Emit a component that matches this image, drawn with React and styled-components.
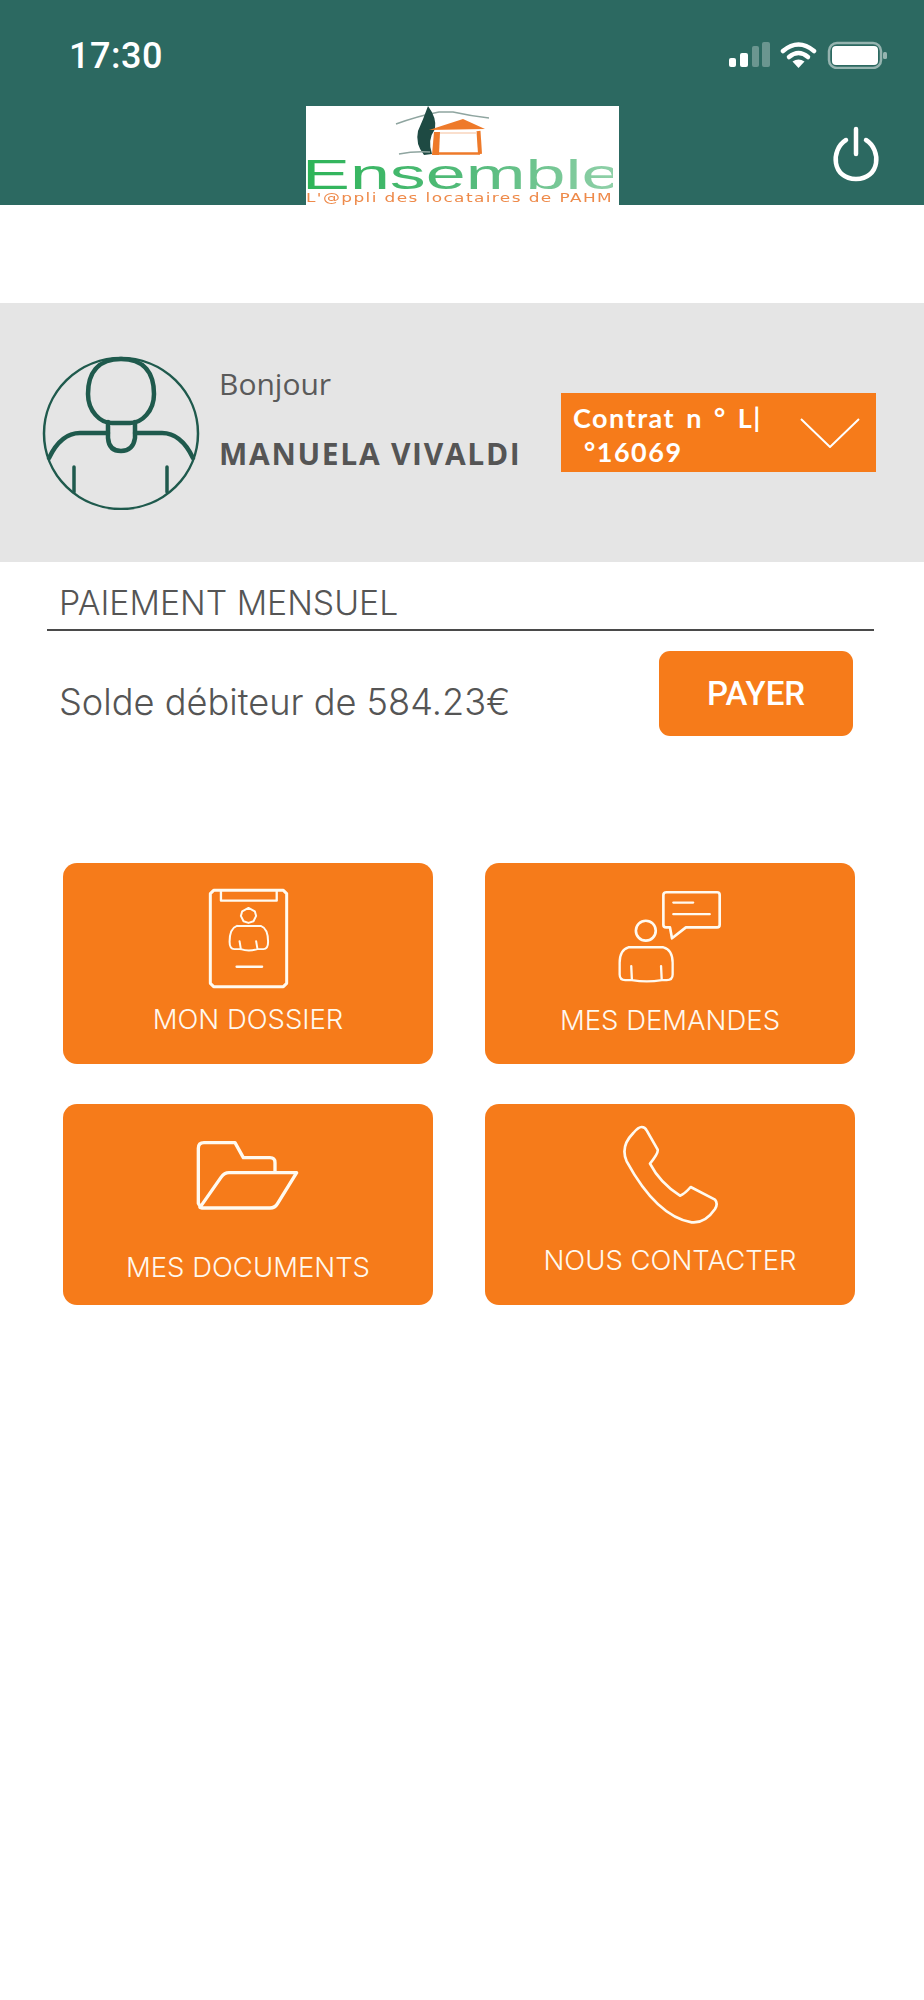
import React from "react";
import styled, { createGlobalStyle } from "styled-components";

const GlobalStyle = createGlobalStyle`
  html, body {
    margin: 0;
    padding: 0;
    background: #fff;
  }
  * {
    box-sizing: border-box;
  }
`;

const Page = styled.div`
  width: 924px;
  min-height: 2000px;
  background: #fff;
  font-family: Inter, "Liberation Sans", sans-serif;
  color: #555;
`;

const Header = styled.header`
  height: 205px;
  background: #2c6961;
  display: flex;
  flex-direction: column;
`;

const StatusBar = styled.div`
  height: 106px;
  padding: 36px 36px 0 69px;
  display: flex;
  justify-content: space-between;
  align-items: flex-start;
`;

const Clock = styled.span`
  font-family: Roboto, sans-serif;
  font-size: 36px;
  line-height: 40px;
  font-weight: 500;
  letter-spacing: 0.5px;
  color: #fff;
`;

const StatusIcons = styled.svg`
  margin-top: 5px;
  display: block;
`;

const LogoRow = styled.div`
  flex: 1;
  padding: 0 44px;
  display: grid;
  grid-template-columns: 1fr auto 1fr;
  align-items: stretch;
`;

const Logo = styled.div`
  grid-column: 2;
  width: 313px;
  background: #fff;
  display: flex;
  flex-direction: column;
`;

const LogoDrawing = styled.svg`
  display: block;
  height: 53px;
`;

const LogoName = styled.div`
  margin-left: -4px;
  font-family: "Liberation Sans", sans-serif;
  font-size: 42px;
  line-height: 32px;
  height: 32px;
  width: 182px;
  transform: scaleX(1.71);
  transform-origin: left center;
  background: linear-gradient(90deg, #2cb457 0%, #55bb7c 55%, #8fd0a8 100%);
  -webkit-background-clip: text;
  background-clip: text;
  color: transparent;
`;

const LogoTagline = styled.div`
  width: 219px;
  font-family: "DejaVu Sans", sans-serif;
  font-size: 12px;
  line-height: 14px;
  letter-spacing: 1px;
  white-space: nowrap;
  transform: scaleX(1.41);
  transform-origin: left center;
  color: #ee8a4a;
`;

const PowerButton = styled.svg`
  grid-column: 3;
  justify-self: end;
  margin-top: 20px;
  display: block;
`;

const Welcome = styled.section`
  margin-top: 98px;
  height: 259px;
  background: #e5e5e5;
  padding: 0 48px 0 42px;
  display: flex;
  align-items: center;
`;

const Avatar = styled.svg`
  display: block;
  flex: none;
`;

const Greeting = styled.div`
  margin: 0 0 27px 19px;
  flex: 1;
  display: flex;
  flex-direction: column;
  gap: 31px;
  font-family: "Open Sans", sans-serif;
`;

const Hello = styled.span`
  font-size: 30px;
  line-height: 38px;
  color: #5a5a5a;
`;

const Name = styled.span`
  font-size: 30px;
  line-height: 40px;
  font-weight: 700;
  letter-spacing: 1.7px;
  color: #555;
  white-space: nowrap;
`;

const ContractSelect = styled.div`
  width: 315px;
  height: 79px;
  background: #f67b1a;
  padding: 8px 16px 0 12px;
  display: flex;
  justify-content: space-between;
  align-items: flex-start;
`;

const ContractText = styled.span`
  width: 205px;
  font-family: Lato, sans-serif;
  font-size: 27px;
  line-height: 34px;
  font-weight: 700;
  letter-spacing: 1.5px;
  word-spacing: 3px;
  color: #fff;
`;

const Chevron = styled.svg`
  margin-top: 17px;
  display: block;
`;

const Payment = styled.section`
  padding: 22px 50px 0 47px;
`;

const SectionTitle = styled.h2`
  margin: 0;
  padding: 0 0 7px 12px;
  border-bottom: 2px solid #4a4a4a;
  font-size: 33.8px;
  line-height: 38px;
  font-weight: 300;
  color: #555;
`;

const BalanceRow = styled.div`
  margin-top: 20px;
  padding: 0 21px 0 12px;
  display: flex;
  justify-content: space-between;
  align-items: center;
`;

const Balance = styled.span`
  margin-top: 17px;
  font-size: 36.2px;
  line-height: 40px;
  font-weight: 300;
  color: #555;
`;

const PayButton = styled.button`
  width: 194px;
  height: 85px;
  border: 0;
  border-radius: 11px;
  background: #f67b1a;
  font-family: Roboto, sans-serif;
  font-size: 33px;
  font-weight: 500;
  color: #fff;
`;

const Tiles = styled.nav`
  margin-top: 127px;
  padding: 0 69px 0 63px;
  display: grid;
  grid-template-columns: 370px 370px;
  grid-auto-rows: 201px;
  column-gap: 52px;
  row-gap: 40px;
`;

const Tile = styled.a`
  border-radius: 14px;
  background: #f67b1a;
  padding-top: ${(p) => p.$top}px;
  display: flex;
  flex-direction: column;
  align-items: center;
`;

const TileIcon = styled.svg`
  display: block;
  fill: none;
  stroke: #fffaf0;
  stroke-linecap: round;
  stroke-linejoin: round;
  height: ${(p) => p.$height}px;
  width: ${(p) => p.$width}px;
  margin-left: ${(p) => p.$shift || 0}px;
`;

const TileLabel = styled.span`
  margin-top: ${(p) => p.$gap}px;
  font-size: 27.5px;
  line-height: 30px;
  font-weight: 300;
  color: #fff8ee;
  white-space: nowrap;
`;

const App = () => {
  return (
    <Page>
      <GlobalStyle />
      <Header>
        <StatusBar>
          <Clock>17:30</Clock>
          <StatusIcons width="161" height="28" viewBox="0 0 161 28" fill="#fff">
            <rect x="2" y="17" width="7" height="9" rx="2" />
            <rect x="13" y="12" width="8" height="14" rx="2" />
            <rect x="25" y="5" width="7" height="21" rx="2" opacity="0.3" />
            <rect x="35" y="1" width="8" height="25" rx="2" opacity="0.3" />
            <path d="M56 10 Q71.5 -3 87 10" fill="none" stroke="#fff" strokeWidth="4.5" strokeLinecap="round" />
            <path d="M62 16 Q71.5 8 81 16" fill="none" stroke="#fff" strokeWidth="4.5" strokeLinecap="round" />
            <path d="M65.5 20.5 Q71.5 16.5 77.5 20.5 L71.5 27Z" />
            <rect x="102" y="2" width="52" height="25" rx="8" fill="none" stroke="#fff" strokeOpacity="0.5" strokeWidth="2.5" />
            <rect x="105" y="5" width="46" height="19" rx="4" />
            <rect x="156" y="11" width="4" height="7" rx="1.5" opacity="0.5" />
          </StatusIcons>
        </StatusBar>
        <LogoRow>
          <Logo>
            <LogoDrawing width="313" height="53" viewBox="0 0 313 53">
              <path d="M90 18 Q112 10 133 6 L147 6 Q165 10 183 12" fill="none" stroke="#8fa5a0" strokeWidth="1.5" />
              <path d="M122 0 Q131 12 129 23 Q121 34 126 48 L118 49 Q109 38 112 25 Q117 14 122 0Z" fill="#1e4a43" />
              <path d="M123 24 L157 13 L179 23Z" fill="#ee7a2a" />
              <path d="M128 26 L134 26 L133 49 L126 49Z" fill="#ee7a2a" />
              <path d="M172.5 25 L174 48" fill="none" stroke="#ee7a2a" strokeWidth="4" />
              <path d="M127 47.5 L174 47.5" fill="none" stroke="#ee7a2a" strokeWidth="2.5" />
              <path d="M134 27 L171 27" fill="none" stroke="#f9d5bd" strokeWidth="1.5" />
              <path d="M93 48 Q108 45 124 46" fill="none" stroke="#8fa5a0" strokeWidth="1.5" />
            </LogoDrawing>
            <LogoName>Ensemble</LogoName>
            <LogoTagline>L'@ppli des locataires de PAHM</LogoTagline>
          </Logo>
          <PowerButton width="48" height="56" viewBox="0 0 48 56" fill="none" stroke="#fff" strokeWidth="4.5" strokeLinecap="round">
            <path d="M24 3 V28" />
            <path d="M14 14 C-2 24 0 53 24 53 C48 53 50 24 34 14" />
          </PowerButton>
        </LogoRow>
      </Header>

      <Welcome>
        <Avatar width="158" height="154" viewBox="12 10 158 154" fill="none" stroke="#1f5a4d" strokeLinecap="round">
          <ellipse cx="91" cy="87.5" rx="77" ry="75.5" strokeWidth="2.5" />
          <path d="M91 13 C115 13 124 28 124 48 C124 65 112 77 100 77 H82 C70 77 58 65 58 48 C58 28 67 13 91 13Z" strokeWidth="4.5" />
          <path d="M78 76 V92 Q79 105 91 105 Q103 105 105 92 V76" strokeWidth="4.5" />
          <path d="M78 87 H50 Q31 87 19 112" strokeWidth="4.5" />
          <path d="M105 87 H132 Q151 87 163 112" strokeWidth="4.5" />
          <path d="M44 121 V146 M137 121 V146" strokeWidth="3.5" />
        </Avatar>
        <Greeting>
          <Hello>Bonjour</Hello>
          <Name>MANUELA VIVALDI</Name>
        </Greeting>
        <ContractSelect>
          <ContractText>Contrat n ° L| {"\u00a0"}°16069</ContractText>
          <Chevron width="60" height="30" viewBox="0 0 60 30" fill="none" stroke="#fff" strokeWidth="2">
            <path d="M1 1 L30 29 L59 1" />
          </Chevron>
        </ContractSelect>
      </Welcome>

      <Payment>
        <SectionTitle>PAIEMENT MENSUEL</SectionTitle>
        <BalanceRow>
          <Balance>Solde débiteur de 584.23€</Balance>
          <PayButton>PAYER</PayButton>
        </BalanceRow>
      </Payment>

      <Tiles>
        <Tile $top={24}>
          <TileIcon $width={83} $height={103} viewBox="470 105 250 310" strokeWidth="9">
            <path d="M490 115 H700 L710 125 V395 L700 405 H490 L480 395 V125Z" />
            <path d="M512 115 V146 H680 V115" strokeWidth="7" />
            <path d="M595 168 L614 178 L618 192 L610 208 L595 213 L580 208 L572 192 L576 178Z" strokeWidth="6" />
            <path d="M560 222 H632 Q654 230 654 270 Q654 292 640 292 H622 L618 268 M622 292 Q595 300 572 292 H552 Q538 292 538 270 Q538 230 560 222 M572 292 L568 268" strokeWidth="6" />
            <path d="M559 345 H636" strokeWidth="7" />
          </TileIcon>
          <TileLabel $gap={14}>MON DOSSIER</TileLabel>
        </Tile>
        <Tile $top={26}>
          <TileIcon $width={106} $height={96} viewBox="440 118 320 288" strokeWidth="8">
            <path d="M590 127 H742 Q750 127 750 135 V225 Q750 233 742 233 H648 L606 266 L600 233 H588 Q580 233 580 225 V135 Q580 127 590 127Z" />
            <path d="M610 158 H670 M610 193 H720" strokeWidth="7" />
            <circle cx="527" cy="243" r="30" />
            <path d="M475 293 H580 Q608 300 608 340 V375 Q608 392 590 392 H575 L573 350 M575 392 Q530 400 485 392 H465 Q448 392 448 375 V340 Q448 300 475 293 M485 392 L483 350" strokeWidth="7" />
          </TileIcon>
          <TileLabel $gap={20}>MES DEMANDES</TileLabel>
        </Tile>
        <Tile $top={36}>
          <TileIcon $width={106} $height={74} $shift={-2} viewBox="437 150 318 222" strokeWidth="10">
            <path d="M455 348 L450 340 V175 Q450 158 467 158 H560 L585 203 H665 Q680 203 680 218 V245" />
            <path d="M455 352 L518 262 Q528 248 542 248 H745 L688 340 Q680 354 665 354 H460Z" />
          </TileIcon>
          <TileLabel $gap={38}>MES DOCUMENTS</TileLabel>
        </Tile>
        <Tile $top={20}>
          <TileIcon $width={100} $height={103} viewBox="450 103 300 309" strokeWidth="8">
            <path d="M515 112 Q525 112 530 122 L563 180 Q566 190 540 222 Q570 280 630 318 Q645 312 662 292 L735 330 Q745 342 735 358 Q705 402 665 398 Q560 380 470 215 Q450 170 490 130 Q505 112 515 112Z" />
          </TileIcon>
          <TileLabel $gap={18}>NOUS CONTACTER</TileLabel>
        </Tile>
      </Tiles>
    </Page>
  );
};

export default App;
